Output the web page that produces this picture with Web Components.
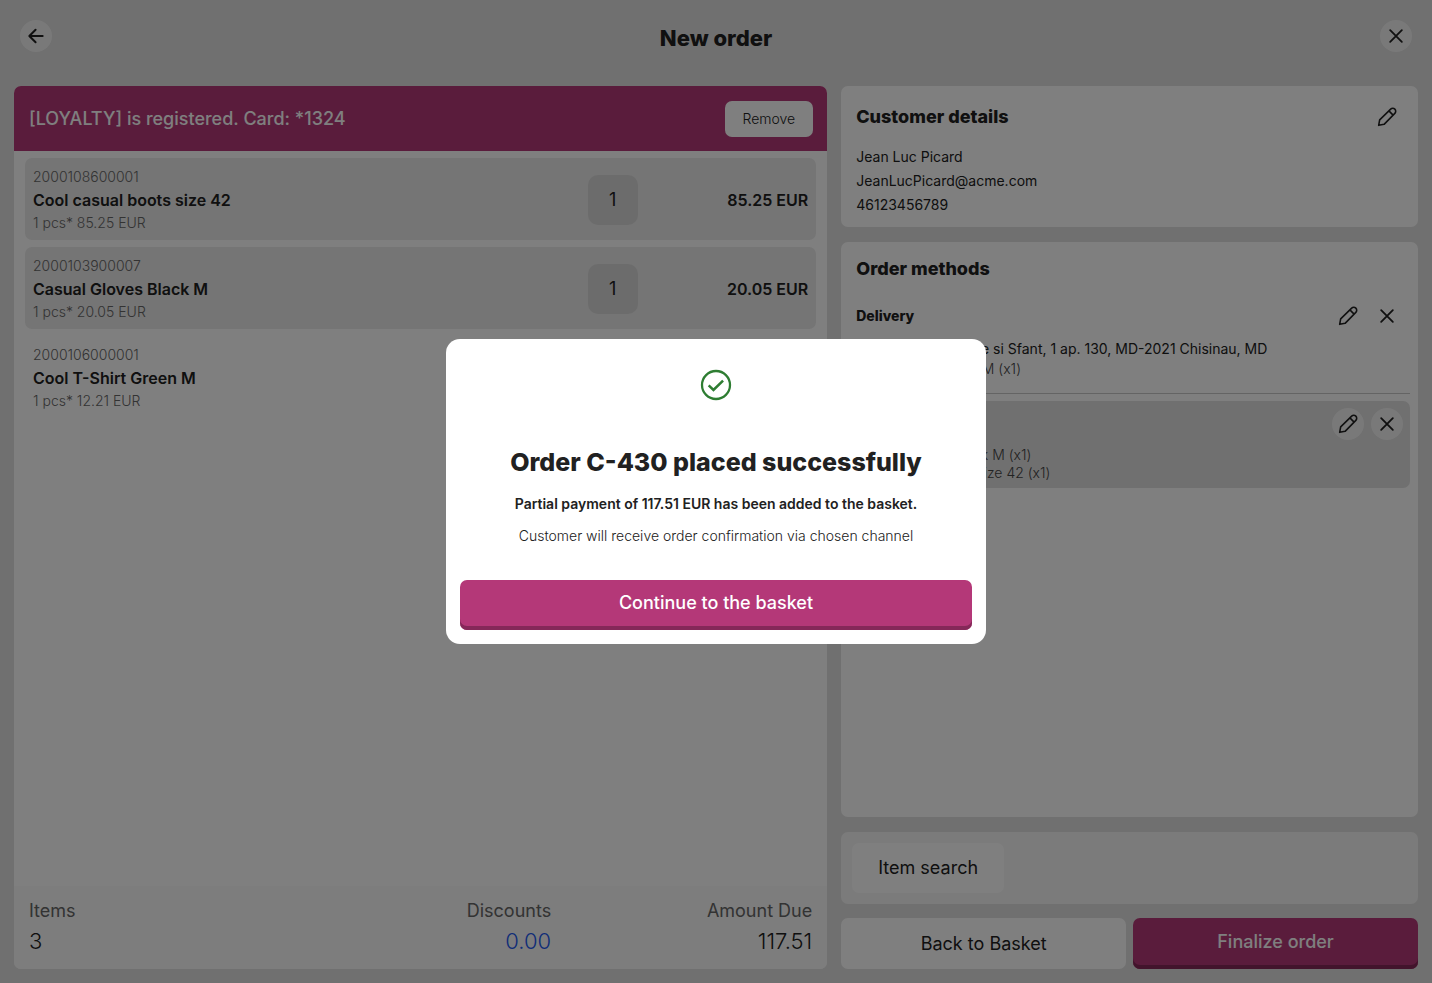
<!DOCTYPE html>
<html lang="en">
<head>
<meta charset="utf-8">
<title>New order</title>
<style>
    body {
        margin: 0;
        background: #e0e0e0;
        color: #212121;
        font-family: Inter, "Liberation Sans", sans-serif;
        --heading: Inter, "Liberation Sans", sans-serif;
        --brand: #b43878;
        --brand-dark: #852859;
    }
</style>
</head>
<body>
<order-page></order-page>
<success-dialog heading="Order C-430 placed successfully" action="Continue to the basket">
    <strong slot="lead">Partial payment of 117.51 EUR has been added to the basket.</strong>
    Customer will receive order confirmation via chosen channel
</success-dialog>

<script>
const icons = {
    back: '<path d="M20 12H4.500M11.500 4.500L4 12l7.500 7.500" stroke-width="2.400"/>',
    close: '<path d="M5 5l14 14M19 5L5 19" stroke-width="2.200"/>',
    edit: '<path d="M2 22l1.200-6.500L16.400 2.600a3.200 3.200 0 0 1 5 5L8.500 20.800zM14.300 4.700l5 5" stroke-width="1.900"/>',
    check: '<circle cx="12" cy="12" r="10.500" stroke-width="1.700"/><path d="M6.500 12.300l3.600 3.400 7.200-7" stroke-width="1.900" stroke-linecap="butt" stroke-linejoin="miter"/>'
};

function define(name, html, setup) {
    const template = document.createElement('template');
    template.innerHTML = html;
    customElements.define(name, class extends HTMLElement {
        constructor() {
            super();
            this.attachShadow({ mode: 'open' });
            this.shadowRoot.appendChild(template.content.cloneNode(true));
        }

        connectedCallback() {
            if (setup) setup(this, this.shadowRoot);
        }
    });
}

define('line-icon', `
    <style>
        :host { display: block; width: 20px; height: 20px; }
        svg { display: block; width: 100%; height: 100%; fill: none; stroke: currentColor; stroke-linecap: round; stroke-linejoin: round; }
    </style>
    <svg viewBox="0 0 24 24" aria-hidden="true"></svg>
`, (el, root) => {
    root.querySelector('svg').innerHTML = icons[el.getAttribute('name')];
});

define('icon-button', `
    <style>
        :host { display: block; }
        button {
            display: grid;
            place-items: center;
            width: 32px;
            height: 32px;
            padding: 0;
            border: 0;
            border-radius: 50%;
            background: transparent;
            color: #212121;
            cursor: pointer;
        }
        :host([filled]) button { background: #f3f3f3; }
    </style>
    <button type="button"><line-icon></line-icon></button>
`, (el, root) => {
    root.querySelector('button').setAttribute('aria-label', el.getAttribute('label'));
    const icon = document.createElement('line-icon');
    icon.setAttribute('name', el.getAttribute('icon'));
    root.querySelector('line-icon').replaceWith(icon);
});

define('text-button', `
    <style>
        :host { display: block; }
        button {
            display: block;
            width: 100%;
            height: 100%;
            min-height: 50px;
            padding: 0 26px;
            border: 0;
            border-radius: 7px;
            background: #fff;
            color: #212121;
            font: 400 18px/24px Inter, sans-serif;
            cursor: pointer;
        }
        :host([small]) button { min-height: 36px; padding: 0 18px; font-size: 14px; font-weight: 300; line-height: 20px; }
        :host([primary]) button {
            padding-bottom: 4px;
            background: var(--brand);
            box-shadow: inset 0 -4px var(--brand-dark);
            color: #fff;
            font-weight: 500;
        }
    </style>
    <button type="button"><slot></slot></button>
`);

define('page-header', `
    <style>
        :host {
            display: grid;
            grid-template-columns: 32px 1fr 32px;
            align-items: center;
            padding: 6px 6px 34px;
        }
        h1 { margin: 0; padding-top: 4px; font: 800 22px/28px var(--heading); text-align: center; }
    </style>
    <icon-button icon="back" label="Back" filled></icon-button>
    <h1><slot></slot></h1>
    <icon-button icon="close" label="Close" filled></icon-button>
`);

define('loyalty-banner', `
    <style>
        :host {
            display: flex;
            align-items: center;
            justify-content: space-between;
            padding: 15px 14px 14px 15px;
            background: var(--brand);
            color: #fff;
            font: 500 18px/24px Inter, sans-serif;
        }
    </style>
    <span><slot></slot></span>
    <text-button small>Remove</text-button>
`);

define('order-line', `
    <style>
        :host {
            display: grid;
            grid-template-columns: 1fr 50px 22%;
            align-items: center;
            height: 82px;
            box-sizing: border-box;
            padding: 2px 8px 0;
            border-radius: 7px;
        }
        :host([filled]) { background: #eaeaea; }
        .code, .sum { color: #666; font-size: 14px; font-weight: 300; line-height: 22px; }
        .name { font-size: 16px; font-weight: 600; line-height: 24px; }
        .qty {
            height: 50px;
            border-radius: 10px;
            background: #d9d9d9;
            font-size: 18px;
            line-height: 50px;
            text-align: center;
        }
        .price { font-size: 16px; font-weight: 600; text-align: right; }
        :host(:not([filled])) .qty { visibility: hidden; }
    </style>
    <div>
        <div class="code"></div>
        <div class="name"><slot></slot></div>
        <div class="sum"></div>
    </div>
    <div class="qty"></div>
    <div class="price"></div>
`, (el, root) => {
    root.querySelector('.code').textContent = el.getAttribute('code');
    root.querySelector('.sum').textContent = '1 pcs* ' + el.getAttribute('price') + ' EUR';
    if (el.hasAttribute('filled')) {
        root.querySelector('.qty').textContent = '1';
        root.querySelector('.price').textContent = el.getAttribute('price') + ' EUR';
    }
});

define('order-totals', `
    <style>
        :host { display: block; padding: 13px 15px; background: #fafafa; }
        dl { display: grid; grid-template-columns: repeat(3, 1fr); margin: 0; text-align: right; }
        div:first-child { text-align: left; }
        dt { color: #666; font-size: 18px; line-height: 24px; }
        dd { margin: 3px 0 0; font-size: 22px; font-weight: 300; line-height: 30px; }
        .discount { color: #1e5af0; }
    </style>
    <dl>
        <div><dt>Items</dt><dd>3</dd></div>
        <div><dt>Discounts</dt><dd class="discount">0.00</dd></div>
        <div><dt>Amount Due</dt><dd>117.51</dd></div>
    </dl>
`);

define('basket-panel', `
    <style>
        :host {
            display: flex;
            flex-direction: column;
            overflow: hidden;
            border-radius: 7px;
            background: #fff;
        }
        .lines { display: grid; align-content: start; gap: 7px; flex: 1; padding: 7px 11px; }
    </style>
    <loyalty-banner>[LOYALTY] is registered. Card: *1324</loyalty-banner>
    <div class="lines"><slot></slot></div>
    <order-totals></order-totals>
`);

define('customer-card', `
    <style>
        :host { display: block; padding: 15px 15px 10px; border-radius: 7px; background: #fff; }
        header { display: flex; align-items: center; justify-content: space-between; margin-bottom: 12px; }
        h2 { margin: 0; font: 800 18px/24px var(--heading); }
        div { font-size: 14px; line-height: 24px; }
    </style>
    <header>
        <h2>Customer details</h2>
        <icon-button icon="edit" label="Edit customer"></icon-button>
    </header>
    <div>Jean Luc Picard</div>
    <div>JeanLucPicard@acme.com</div>
    <div>46123456789</div>
`);

define('order-method', `
    <style>
        :host { display: block; padding: 7px 7px 15px; border-bottom: 1px solid #c8c8c8; }
        :host([selected]) { padding-bottom: 6px; border: 0; border-radius: 7px; background: #e0e0e0; }
        header { display: flex; align-items: center; gap: 7px; margin-bottom: 6px; }
        h3 { flex: 1; margin: 0; font: 800 14px/20px var(--heading); }
        .items { color: #444; font-size: 14px; font-weight: 300; line-height: 18px; }
        ::slotted([slot=address]) { font-size: 14px; line-height: 22px; color: #212121; }
    </style>
    <header>
        <h3></h3>
        <icon-button icon="edit" label="Edit method"></icon-button>
        <icon-button icon="close" label="Remove method"></icon-button>
    </header>
    <slot name="address"></slot>
    <div class="items"><slot></slot></div>
`, (el, root) => {
    root.querySelector('h3').textContent = el.getAttribute('name');
    if (el.hasAttribute('selected')) {
        root.querySelectorAll('icon-button').forEach(b => b.setAttribute('filled', ''));
    }
});

define('methods-card', `
    <style>
        :host { display: block; flex: 1; padding: 15px 8px; border-radius: 7px; background: #fff; }
        h2 { margin: 0 7px 12px; font: 800 18px/24px var(--heading); }
        .list { display: grid; gap: 7px; }
    </style>
    <h2>Order methods</h2>
    <div class="list"><slot></slot></div>
`);

define('order-page', `
    <style>
        :host {
            display: flex;
            flex-direction: column;
            min-height: 100vh;
            box-sizing: border-box;
            padding: 14px;
        }
        main { display: grid; grid-template-columns: 141fr 100fr; gap: 14px; flex: 1; }
        aside { display: flex; flex-direction: column; gap: 15px; }
        .search { display: flex; padding: 11px; border-radius: 7px; background: #f7f7f7; }
        .bottom { display: grid; gap: 14px; }
        .actions { display: grid; grid-template-columns: 1fr 1fr; grid-auto-rows: 51px; gap: 7px; }
    </style>
    <page-header>New order</page-header>
    <main>
        <basket-panel>
            <order-line filled code="2000108600001" price="85.25">Cool casual boots size 42</order-line>
            <order-line filled code="2000103900007" price="20.05">Casual Gloves Black M</order-line>
            <order-line code="2000106000001" price="12.21">Cool T-Shirt Green M</order-line>
        </basket-panel>
        <aside>
            <customer-card></customer-card>
            <methods-card>
                <order-method name="Delivery">
                    <div slot="address">Bld. Stefan cel Mare si Sfant, 1 ap. 130, MD-2021 Chisinau, MD</div>
                    <div>Cool T-Shirt Green M (x1)</div>
                </order-method>
                <order-method name="" selected>
                    <div>Casual Gloves Black M (x1)</div>
                    <div>Cool casual boots size 42 (x1)</div>
                </order-method>
            </methods-card>
            <div class="bottom">
                <div class="search"><text-button>Item search</text-button></div>
                <div class="actions">
                    <text-button>Back to Basket</text-button>
                    <text-button primary>Finalize order</text-button>
                </div>
            </div>
        </aside>
    </main>
`);

define('success-dialog', `
    <style>
        :host {
            position: fixed;
            inset: 0;
            display: grid;
            place-items: center;
            background: rgba(0, 0, 0, .5);
        }
        section {
            width: 540px;
            max-width: 100%;
            box-sizing: border-box;
            padding: 30px 14px 14px;
            border-radius: 14px;
            background: #fff;
            text-align: center;
        }
        line-icon { width: 32px; height: 32px; margin: 0 auto 45px; color: #2e7d32; }
        h2 { margin: 0 0 14px; font: 800 25px/32px var(--heading); }
        p { margin: 0 0 8px; font-size: 14px; font-weight: 300; line-height: 24px; }
        p:last-of-type { margin-bottom: 32px; }
        ::slotted(strong) { font-weight: 600; }
    </style>
    <section role="dialog" aria-modal="true" aria-labelledby="heading">
        <line-icon name="check"></line-icon>
        <h2 id="heading"></h2>
        <p><slot name="lead"></slot></p>
        <p><slot></slot></p>
        <text-button primary></text-button>
    </section>
`, (el, root) => {
    root.querySelector('h2').textContent = el.getAttribute('heading');
    root.querySelector('text-button').textContent = el.getAttribute('action');
});
</script>
</body>
</html>
